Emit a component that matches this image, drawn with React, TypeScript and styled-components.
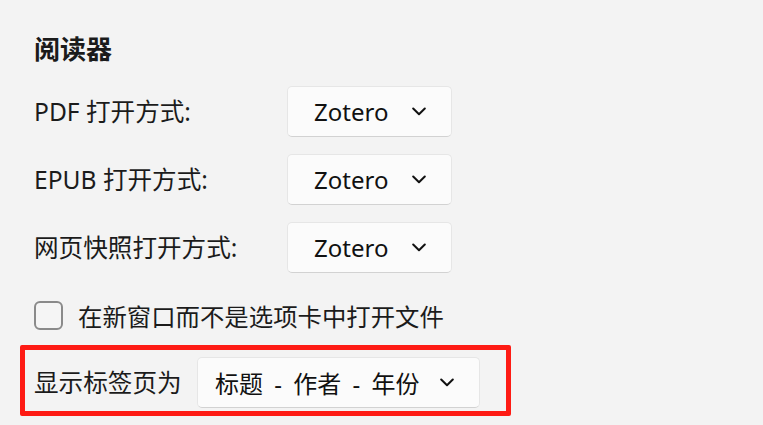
import styled, { createGlobalStyle } from "styled-components";

const GlobalStyle = createGlobalStyle`
  html, body {
    margin: 0;
    padding: 0;
    background: #f3f3f3;
  }
  body {
    font-family: "Noto Sans", "Noto Sans CJK SC", sans-serif;
    color: #1b1b1b;
  }
`;

const Page = styled.div`
  display: flex;
  flex-direction: column;
  align-items: flex-start;
  width: 763px;
  height: 425px;
  padding: 32px 0 0 34px;
  box-sizing: border-box;
  overflow: hidden;
`;

const Heading = styled.h2`
  margin: 0 0 20px;
  font-size: 26px;
  line-height: 34px;
  font-weight: 700;
`;

const OptionsGrid = styled.div`
  display: grid;
  grid-template-columns: 253px 165px;
  grid-auto-rows: 51px;
  row-gap: 17px;
  align-items: center;
`;

const Label = styled.span`
  font-size: 24.6px;
  line-height: 32px;
  white-space: nowrap;
`;

const Dropdown = styled.button<{ $width: number; $padLeft: number }>`
  display: flex;
  align-items: center;
  justify-content: space-between;
  width: ${(p) => p.$width}px;
  height: 51px;
  padding: 0 25px 0 ${(p) => p.$padLeft}px;
  box-sizing: border-box;
  background: #fbfbfb;
  border: 1px solid #e6e6e6;
  border-bottom-color: #d2d2d2;
  border-radius: 5px;
  font-family: inherit;
  font-size: 24px;
  word-spacing: 5px;
  color: #111;
  cursor: pointer;
`;

const CheckRow = styled.label`
  display: flex;
  align-items: center;
  gap: 15px;
  margin-top: 28px;
  height: 29px;
  font-size: 24.4px;
`;

const CheckBox = styled.span`
  width: 29px;
  height: 29px;
  box-sizing: border-box;
  border: 2px solid #8a8a8a;
  border-radius: 6px;
  background: #f5f5f5;
`;

const Highlight = styled.div`
  display: flex;
  align-items: flex-start;
  margin: 15px 0 0 -14px;
  width: 491px;
  height: 71px;
  box-sizing: border-box;
  padding: 7px 0 0 9px;
  border: 5px solid #fe1b14;
  border-radius: 2px;
`;

const InlineLabel = styled(Label)`
  width: 163px;
  line-height: 51px;
`;

const Chevron = () => (
  <svg width="14" height="9" viewBox="0 0 14 9" fill="none">
    <polyline
      points="1.2,1.5 7,7.3 12.8,1.5"
      stroke="#111"
      strokeWidth="2"
      strokeLinecap="round"
      strokeLinejoin="round"
    />
  </svg>
);

const openers = ["PDF 打开方式:", "EPUB 打开方式:", "网页快照打开方式:"];

export default function App() {
  return (
    <Page>
      <GlobalStyle />
      <Heading>阅读器</Heading>
      <OptionsGrid>
        {openers.map((label) => (
          <>
            <Label key={label}>{label}</Label>
            <Dropdown key={label + "-dd"} $width={165} $padLeft={26}>
              Zotero
              <Chevron />
            </Dropdown>
          </>
        ))}
      </OptionsGrid>
      <CheckRow>
        <CheckBox />
        在新窗口而不是选项卡中打开文件
      </CheckRow>
      <Highlight>
        <InlineLabel>显示标签页为</InlineLabel>
        <Dropdown $width={283} $padLeft={17}>
          标题 - 作者 - 年份
          <Chevron />
        </Dropdown>
      </Highlight>
    </Page>
  );
}
